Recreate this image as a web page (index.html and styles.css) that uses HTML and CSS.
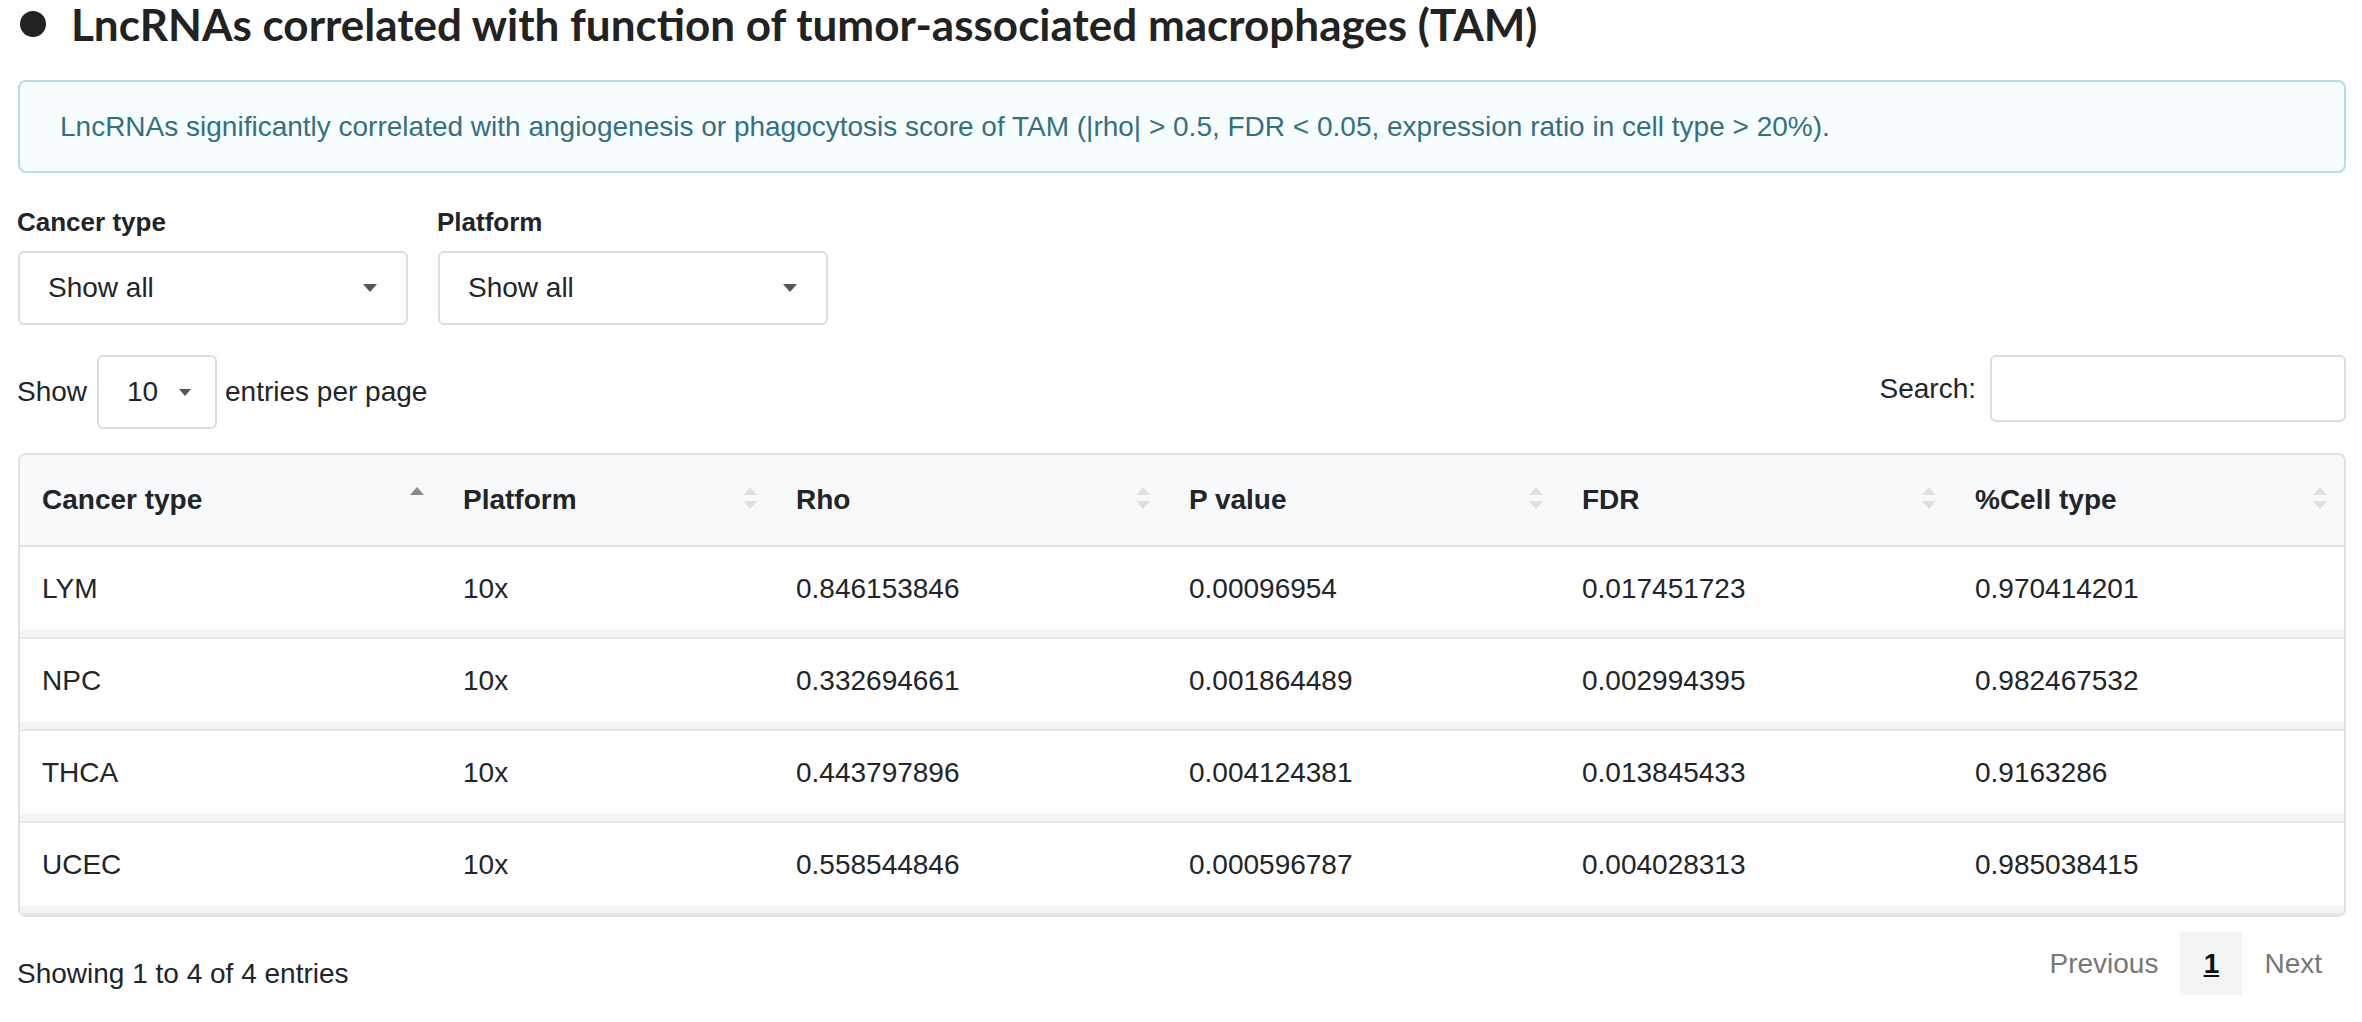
FILE: index.html
```html
<!DOCTYPE html>
<html lang="en">
<head>
<meta charset="utf-8">
<title>LncRNAs correlated with function of TAM</title>
<link rel="stylesheet" href="styles.css">
</head>
<body>
<main class="page">
  <h3 class="section-title"><span class="dot"></span>LncRNAs correlated with function of tumor-associated macrophages (TAM)</h3>

  <div class="alert-info">LncRNAs significantly correlated with angiogenesis or phagocytosis score of TAM (|rho| &gt; 0.5, FDR &lt; 0.05, expression ratio in cell type &gt; 20%).</div>

  <div class="filters">
    <div class="filter">
      <label class="filter-label">Cancer type</label>
      <div class="select-box"><span>Show all</span><span class="caret"></span></div>
    </div>
    <div class="filter">
      <label class="filter-label">Platform</label>
      <div class="select-box"><span>Show all</span><span class="caret"></span></div>
    </div>
  </div>

  <div class="dt-top">
    <div class="dt-length">
      <span>Show</span>
      <div class="length-box"><span>10</span><span class="caret small"></span></div>
      <span>entries per page</span>
    </div>
    <div class="dt-search">
      <span>Search:</span>
      <div class="search-input"></div>
    </div>
  </div>

  <div class="table-wrap">
    <table class="data-table">
      <thead>
        <tr>
          <th class="sorted">Cancer type<span class="sort"></span></th>
          <th>Platform<span class="sort"></span></th>
          <th>Rho<span class="sort"></span></th>
          <th>P value<span class="sort"></span></th>
          <th>FDR<span class="sort"></span></th>
          <th>%Cell type<span class="sort"></span></th>
        </tr>
      </thead>
      <tbody>
        <tr><td>LYM</td><td>10x</td><td>0.846153846</td><td>0.00096954</td><td>0.017451723</td><td>0.970414201</td></tr>
        <tr><td>NPC</td><td>10x</td><td>0.332694661</td><td>0.001864489</td><td>0.002994395</td><td>0.982467532</td></tr>
        <tr><td>THCA</td><td>10x</td><td>0.443797896</td><td>0.004124381</td><td>0.013845433</td><td>0.9163286</td></tr>
        <tr><td>UCEC</td><td>10x</td><td>0.558544846</td><td>0.000596787</td><td>0.004028313</td><td>0.985038415</td></tr>
      </tbody>
    </table>
  </div>

  <div class="dt-bottom">
    <div class="dt-info">Showing 1 to 4 of 4 entries</div>
    <nav class="pager">
      <span class="pg disabled">Previous</span>
      <span class="pg current">1</span>
      <span class="pg disabled">Next</span>
    </nav>
  </div>
</main>
</body>
</html>
```

FILE: styles.css
```css
* { box-sizing: border-box; }

html, body {
  margin: 0;
  padding: 0;
  background: #fff;
}

body {
  font-family: "Liberation Sans", Arial, sans-serif;
  font-size: 28px;
  color: #212529;
}

.page {
  padding: 0 16px 0 17px;
}

/* heading */
.section-title {
  display: flex;
  align-items: center;
  margin: 0;
  height: 48px;
  font-family: Lato, "Noto Sans", sans-serif;
  font-weight: 700;
  font-size: 44px;
  color: #222;
  line-height: 1;
}

.dot {
  width: 26px;
  height: 26px;
  border-radius: 50%;
  background: #222;
  margin: 0 25px 0 3px;
  flex: none;
}

/* info banner */
.alert-info {
  margin-top: 32px;
  margin-left: 1px;
  height: 93px;
  display: flex;
  align-items: center;
  padding: 0 40px;
  border: 2px solid #b7dce4;
  border-radius: 8px;
  background: #f7fdfe;
  color: #356f82;
  font-size: 28px;
}

/* filters */
.filters {
  display: flex;
  gap: 29px;
  margin-top: 33px;
}

.filter {
  display: flex;
  flex-direction: column;
}

.filter-label {
  font-weight: 700;
  font-size: 26px;
  height: 32px;
  line-height: 32px;
  margin-bottom: 13px;
}

.select-box {
  width: 390px;
  height: 74px;
  margin-left: 1px;
  border: 2px solid #dcdcdc;
  border-radius: 6px;
  display: flex;
  align-items: center;
  justify-content: space-between;
  padding: 0 29px 0 28px;
  font-size: 28px;
}

.caret {
  width: 0;
  height: 0;
  border-left: 7px solid transparent;
  border-right: 7px solid transparent;
  border-top: 8px solid #555;
}

.caret.small {
  border-left-width: 6px;
  border-right-width: 6px;
  border-top-width: 7px;
}

/* table controls */
.dt-top {
  display: flex;
  justify-content: space-between;
  align-items: center;
  margin-top: 30px;
}

.dt-length {
  display: flex;
  align-items: center;
}

.length-box {
  width: 120px;
  height: 74px;
  margin: 0 8px 0 10px;
  border: 2px solid #dcdcdc;
  border-radius: 6px;
  display: flex;
  align-items: center;
  justify-content: space-between;
  padding: 0 24px 0 28px;
}

.dt-search {
  display: flex;
  align-items: center;
  gap: 14px;
  align-self: flex-start;
}

.search-input {
  width: 356px;
  height: 67px;
  border: 2px solid #dcdcdc;
  border-radius: 6px;
}

/* data table */
.table-wrap {
  margin-top: 24px;
  margin-left: 1px;
  border: 2px solid #e1e1e1;
  border-radius: 8px;
  overflow: hidden;
}

.data-table {
  width: 100%;
  border-collapse: separate;
  border-spacing: 0;
  table-layout: fixed;
}

.data-table th:nth-child(1) { width: 421px; }
.data-table th:nth-child(2) { width: 333px; }
.data-table th:nth-child(3),
.data-table th:nth-child(4),
.data-table th:nth-child(5) { width: 393px; }

.data-table th {
  position: relative;
  text-align: left;
  font-weight: 700;
  height: 92px;
  padding: 0 22px;
  background: #f8f9fa;
  border-bottom: 2px solid #e2e3e4;
}

.sort {
  position: absolute;
  right: 17px;
  top: 32px;
  width: 14px;
  height: 22px;
}

.sort::before,
.sort::after {
  content: "";
  position: absolute;
  left: 0;
  width: 0;
  height: 0;
  border-left: 7px solid transparent;
  border-right: 7px solid transparent;
}

.sort::before {
  top: 0;
  border-bottom: 8px solid #e0e0e0;
}

.sort::after {
  bottom: 0;
  border-top: 8px solid #e0e0e0;
}

.sorted .sort::before { border-bottom-color: #8a8a8a; }
.sorted .sort::after { display: none; }

.data-table td {
  height: 92px;
  padding: 0 22px 8px;
  background: #fff;
  box-shadow: inset 0 -2px 0 #e6e7e7, inset 0 -9px 0 #f3f4f4;
}

/* footer */
.dt-bottom {
  display: flex;
  justify-content: space-between;
  align-items: center;
  margin-top: 15px;
}

.dt-info {
  padding-top: 20px;
}

.pager {
  display: flex;
  align-items: center;
  margin-right: 2px;
}

.pg {
  color: #777;
  padding: 0 22px;
}

.pg.current {
  width: 62px;
  height: 63px;
  padding: 0;
  display: flex;
  align-items: center;
  justify-content: center;
  background: #f3f4f4;
  color: #111;
  font-weight: 700;
  text-decoration: underline;
}
```
